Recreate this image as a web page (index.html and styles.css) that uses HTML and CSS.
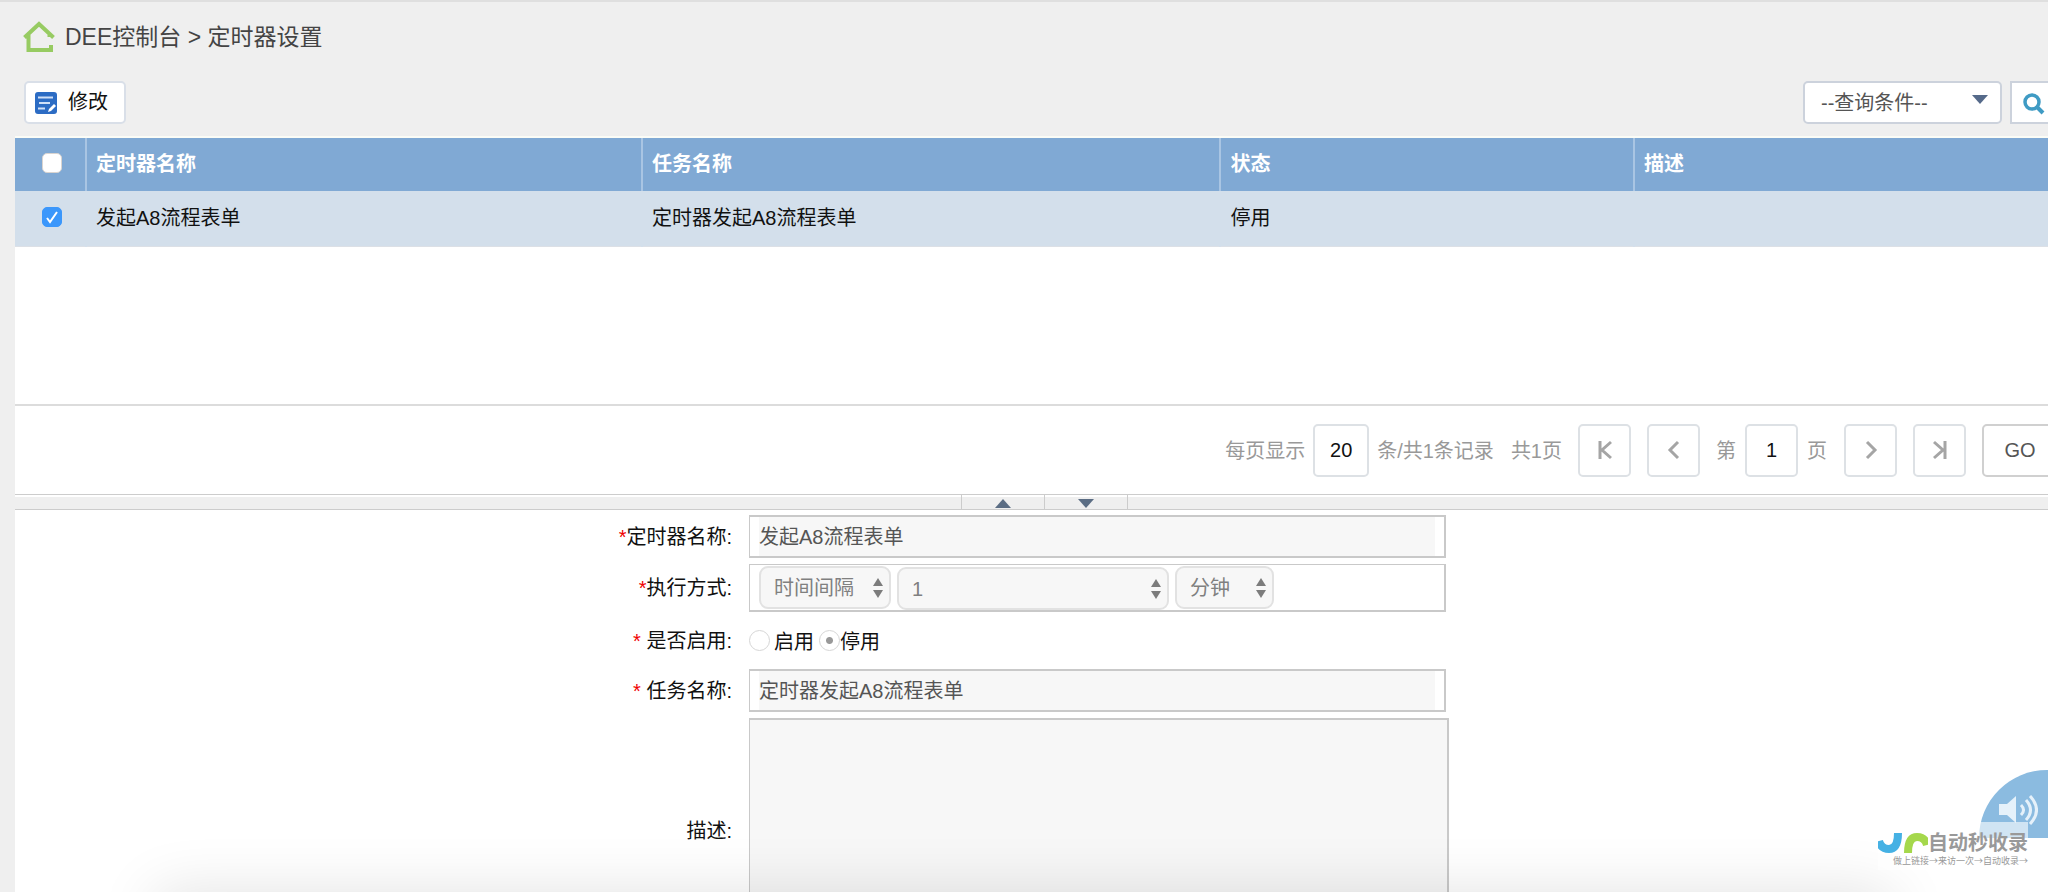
FILE: index.html
```html
<!DOCTYPE html>
<html lang="zh-CN">
<head>
<meta charset="utf-8">
<title>定时器设置</title>
<link rel="stylesheet" href="styles.css">
</head>
<body>
<div class="page">
  <header class="crumb">
    <svg class="home" viewBox="0 0 32 32" fill="none" stroke="#97cb62" stroke-width="4"><path d="M1.500 16.500 16 3l14.500 13.500M5.500 14v15H28v-5M26.500 14v2"/></svg>
    <h1 class="title">DEE控制台 &gt; 定时器设置</h1>
  </header>

  <div class="toolbar">
    <button class="edit" type="button">
      <svg class="edit-icon" viewBox="0 0 24 24"><rect x="1" y="1" width="22" height="22" rx="3" fill="#2c6cc4"/><path d="M4 6.500h15M5 12h11M4 17.500h7" stroke="#cfe0f7" stroke-width="1.800"/><path d="m14 21 1-3 5-5 2 2-5 5z" fill="#fff"/></svg>
      <span class="edit-text">修改</span>
    </button>
    <div class="search">
      <div class="picker query">
        <select class="query-select" aria-label="查询条件"><option>--查询条件--</option></select>
        <svg class="query-arrow" viewBox="0 0 16 9"><path d="M0 0h16L8 9z" fill="#556a8a"/></svg>
      </div>
      <button class="search-btn" type="button" aria-label="查询">
        <svg class="search-icon" viewBox="0 0 22 22" fill="none" stroke="#3f9bc4"><circle cx="9" cy="9" r="7" stroke-width="3.500"/><path d="m14 14 6 6" stroke-width="4"/></svg>
      </button>
    </div>
  </div>

  <main class="panel">
    <div class="list">
      <table class="grid">
        <colgroup><col class="c-check"><col class="c-name"><col class="c-task"><col class="c-state"><col class="c-desc"></colgroup>
        <thead>
          <tr><th><input class="check" type="checkbox" aria-label="全选"></th><th>定时器名称</th><th>任务名称</th><th>状态</th><th>描述</th></tr>
        </thead>
        <tbody>
          <tr><td><input class="check" type="checkbox" aria-label="选择" checked></td><td>发起A8流程表单</td><td>定时器发起A8流程表单</td><td>停用</td><td></td></tr>
        </tbody>
      </table>
    </div>

    <nav class="pager">
      <label for="size">每页显示</label>
      <input class="box size" id="size" value="20">
      <span>条/共1条记录</span>
      <span class="pages">共1页</span>
      <button class="box step" type="button" aria-label="首页"><svg class="step-icon" viewBox="0 0 20 20"><path d="M5 1v18M16 2l-9 8 9 8"/></svg></button>
      <button class="box step" type="button" aria-label="上一页"><svg class="step-icon" viewBox="0 0 20 20"><path d="m14 2-8 8 8 8"/></svg></button>
      <label class="page-label" for="page">第</label>
      <input class="box page-no" id="page" value="1">
      <span>页</span>
      <button class="box step" type="button" aria-label="下一页"><svg class="step-icon" viewBox="0 0 20 20"><path d="m6 2 8 8-8 8"/></svg></button>
      <button class="box step" type="button" aria-label="末页"><svg class="step-icon" viewBox="0 0 20 20"><path d="M15 1v18M4 2l9 8-9 8"/></svg></button>
      <button class="box go" type="button">GO</button>
    </nav>

    <div class="splitter">
      <button class="handle" type="button" aria-label="收起"><svg class="tri" viewBox="0 0 16 9"><path d="M0 9h16L8 0z"/></svg></button>
      <button class="handle" type="button" aria-label="展开"><svg class="tri" viewBox="0 0 16 9"><path d="M0 0h16L8 9z"/></svg></button>
    </div>

    <form class="form">
      <label class="label" for="name"><b class="star">*</b>定时器名称:</label>
      <div class="field"><input class="text" id="name" value="发起A8流程表单" readonly></div>

      <label class="label" for="mode"><b class="star">*</b>执行方式:</label>
      <div class="field combo">
        <div class="picker mode"><select class="drop" id="mode" disabled><option>时间间隔</option></select><svg class="updown" viewBox="0 0 10 20"><path d="M0 8h10L5 0zM0 12h10l-5 8z"/></svg></div>
        <div class="picker amount"><select class="drop" aria-label="间隔" disabled><option>1</option></select><svg class="updown" viewBox="0 0 10 20"><path d="M0 8h10L5 0zM0 12h10l-5 8z"/></svg></div>
        <div class="picker unit"><select class="drop" aria-label="单位" disabled><option>分钟</option></select><svg class="updown" viewBox="0 0 10 20"><path d="M0 8h10L5 0zM0 12h10l-5 8z"/></svg></div>
      </div>

      <span class="label"><b class="star">*</b> 是否启用:</span>
      <div class="radios">
        <input class="radio" type="radio" name="enabled" id="on" disabled><label class="on-label" for="on">启用</label>
        <input class="radio" type="radio" name="enabled" id="off" checked disabled><label for="off">停用</label>
      </div>

      <label class="label" for="task"><b class="star">*</b> 任务名称:</label>
      <div class="field"><input class="text" id="task" value="定时器发起A8流程表单" readonly></div>

      <label class="label" for="desc">描述:</label>
      <textarea class="area" id="desc" readonly></textarea>
    </form>
  </main>

  <div class="dock-shadow"></div>

  <button class="sound" type="button" aria-label="语音">
    <svg class="sound-icon" viewBox="0 0 40 32"><path d="M1 9h8l9-8v27l-9-8H1z" fill="#e5f1fa"/><path d="M23 10q5 5 0 10M28 5q9 10 0 20M32 1q13 14 0 28" fill="none" stroke="#e5f1fa" stroke-width="3"/></svg>
  </button>
  <aside class="mark">
    <div class="mark-top">
      <svg class="mark-logo" viewBox="0 0 50 20" fill="none" stroke-width="8"><path d="M1 8q2 8 10 8 9 0 9-16" stroke="#45b1e4"/><path d="M30 20q0-16 9-16 8 0 10 8" stroke="#a5d84c"/></svg>
      <span>自动秒收录</span>
    </div>
    <div class="mark-sub">做上链接→来访一次→自动收录→</div>
  </aside>
</div>
</body>
</html>
```
FILE: styles.css
```css
* { box-sizing: border-box; }

body, input, select, button, textarea {
  font-family: "Liberation Sans", "Noto Sans CJK SC", sans-serif;
  font-size: 20px;
}

body {
  margin: 0;
  color: #111;
  background: #efefef;
  overflow: hidden;
}

button { padding: 0; }

.page {
  position: relative;
  height: 100vh;
  overflow: hidden;
  border-top: 2px solid #dfdfdf;
}

.crumb {
  display: flex;
  align-items: center;
  gap: 10px;
  height: 70px;
  padding-left: 23px;
}
.home { width: 32px; height: 32px; }
.title {
  margin: 0;
  padding-bottom: 4px;
  font-size: 23px;
  font-weight: 400;
  color: #444;
}

.toolbar {
  display: flex;
  justify-content: space-between;
  align-items: flex-start;
  height: 64px;
  padding: 9px 0 0 24px;
}
.edit {
  display: flex;
  align-items: center;
  gap: 10px;
  height: 43px;
  padding: 0 16px 0 8px;
  color: #111;
  background: #fff;
  border: 2px solid #d9dfe8;
  border-radius: 5px;
}
.edit-icon { width: 24px; height: 24px; }
.edit-text { padding-bottom: 4px; }

.search {
  display: flex;
  gap: 8px;
  margin-right: -10px;
}
.picker { position: relative; }
.query-select {
  width: 199px;
  height: 43px;
  padding: 0 16px;
  color: #555;
  background: #fff;
  border: 2px solid #ccd2dc;
  border-radius: 5px;
  appearance: none;
}
.query-arrow {
  position: absolute;
  top: 14px;
  right: 14px;
  width: 16px;
  height: 9px;
  pointer-events: none;
}
.search-btn {
  display: flex;
  align-items: center;
  width: 48px;
  height: 43px;
  padding: 2px 0 0 11px;
  background: #fff;
  border: 2px solid #ccd2dc;
}
.search-icon { width: 22px; height: 22px; }

.panel {
  margin-left: 15px;
  background: #fff;
  border-top: 2px solid #fbfcf6;
}
.list {
  height: 268px;
  border-bottom: 2px solid #dcdcdc;
}
.grid {
  width: 100%;
  table-layout: fixed;
  border-collapse: collapse;
}
.c-check { width: 71px; }
.c-name { width: 27.35%; }
.c-task { width: 28.45%; }
.c-state { width: 20.35%; }
.grid th, .grid td {
  padding: 0 9px 4px;
  text-align: left;
}
.grid th {
  height: 53px;
  color: #fff;
  background: #80a9d4;
  border-left: 2px solid #a9c5e3;
}
.grid td {
  height: 55px;
  background: #d3dfeb;
  border-left: 2px solid #d3dfeb;
  border-bottom: 1px solid #dce0e6;
}
.grid th:first-child, .grid td:first-child {
  padding: 0 0 5px 4px;
  text-align: center;
  border-left: 0;
}
.check {
  width: 20px;
  height: 20px;
  margin: 0;
  vertical-align: middle;
  appearance: none;
  background: #fff;
  border: 1px solid #d9d4d0;
  border-radius: 5px;
}
.check:checked {
  border-color: #3b97fb;
  background: #3b97fb url("data:image/svg+xml,%3Csvg xmlns='http://www.w3.org/2000/svg' viewBox='0 0 18 18'%3E%3Cpath d='m4 10 3 4 7-10' fill='none' stroke='white' stroke-width='2'/%3E%3C/svg%3E");
}

.pager {
  display: flex;
  align-items: center;
  justify-content: flex-end;
  height: 88px;
  margin-right: -10px;
  color: #999;
}
.pager label, .pager span { padding-bottom: 2px; }
.box {
  height: 53px;
  text-align: center;
  background: #fff;
  border: 2px solid #dde1e5;
  border-radius: 5px;
}
.size { width: 56px; margin: 0 8px; padding: 0; color: #111; }
.pages { margin: 0 16px 0 17px; }
.step {
  display: flex;
  align-items: center;
  justify-content: center;
  width: 53px;
  margin-right: 16px;
}
.step-icon {
  width: 20px;
  height: 20px;
  fill: none;
  stroke: #a5a5a5;
  stroke-width: 3;
}
.page-no { width: 53px; margin: 0 9px; padding: 0; color: #111; }
.page-no + span { margin-right: 17px; }
.go { width: 76px; color: #555; border-color: #d0d0d0; }

.splitter {
  display: flex;
  justify-content: center;
  height: 16px;
  padding-left: 25px;
  background: #efefef;
  border-top: 1px solid #ccc;
  border-bottom: 1px solid #ccc;
  box-shadow: inset 0 2px #fff;
}
.handle {
  display: flex;
  align-items: center;
  justify-content: center;
  width: 83px;
  padding-top: 2px;
  background: none;
  border: 0;
  border-left: 1px solid #ccc;
}
.handle:last-child { width: 84px; border-right: 1px solid #ccc; }
.tri { width: 16px; height: 9px; fill: #5b6d84; }

.form {
  display: grid;
  grid-template-columns: 717fr 697fr 585fr;
  grid-template-rows: 43px 48px 45px 43px 226px;
  gap: 6px 17px;
  padding-top: 5px;
}
.label {
  grid-column: 1;
  align-self: center;
  padding-bottom: 3px;
  text-align: right;
}
.star { color: #f00000; font-weight: 400; }
.field {
  display: flex;
  padding: 0 9px;
  background: #fff;
  border: 2px solid #c9c9c9;
  border-left-width: 1px;
}
.text {
  flex: 1;
  min-width: 0;
  padding: 0 0 2px;
  color: #555;
  background: #f7f7f7;
  border: 0;
}
.combo {
  align-items: flex-start;
  gap: 6px;
  border-top-width: 1px;
}
.mode { width: 132px; padding-top: 1px; }
.amount { width: 272px; padding-top: 2px; }
.unit { width: 99px; padding-top: 1px; }
.drop {
  display: block;
  width: 100%;
  height: 43px;
  padding: 0 13px;
  color: #808080;
  opacity: 1;
  background: #f7f7f7;
  border: 2px solid #e2e2e2;
  border-radius: 9px;
  appearance: none;
}
.updown {
  position: absolute;
  right: 8px;
  bottom: 11px;
  width: 10px;
  height: 20px;
  fill: #7c7c7c;
  pointer-events: none;
}
.radios {
  display: flex;
  align-items: center;
}
.radio {
  width: 21px;
  height: 21px;
  margin: 0;
  appearance: none;
  background: #fff;
  border: 1px solid #d6d6d6;
  border-radius: 50%;
}
.radio:checked { background: radial-gradient(circle, #999 3px, #fff 4px); }
.on-label { margin: 0 5px 0 4px; }
.area {
  margin-right: -3px;
  resize: none;
  background: #f7f7f7;
  border: 2px solid #c9c9c9;
  border-left-width: 1px;
}

.dock-shadow {
  position: absolute;
  top: 100%;
  left: 155px;
  right: 155px;
  height: 60px;
  box-shadow: 0 0 60px rgba(0, 0, 0, 0.12);
  pointer-events: none;
}

.sound {
  position: absolute;
  right: 0;
  bottom: 54px;
  width: 69px;
  height: 68px;
  padding: 14px 10px 0 0;
  text-align: right;
  background: #8bbbe0;
  border: 0;
  border-radius: 69px 0 0 0;
}
.sound-icon { width: 40px; height: 32px; vertical-align: middle; }
.mark {
  position: absolute;
  right: 20px;
  bottom: 22px;
  width: 150px;
  height: 48px;
  padding-top: 11px;
  background: rgba(255, 255, 255, 0.6);
  color: #999;
}
.mark-top {
  display: flex;
  font-weight: 700;
  line-height: 20px;
}
.mark-logo { width: 50px; height: 20px; }
.mark-sub {
  font-family: "Noto Sans CJK SC", sans-serif;
  font-size: 9px;
  line-height: 16px;
  white-space: nowrap;
  text-align: right;
}
```
